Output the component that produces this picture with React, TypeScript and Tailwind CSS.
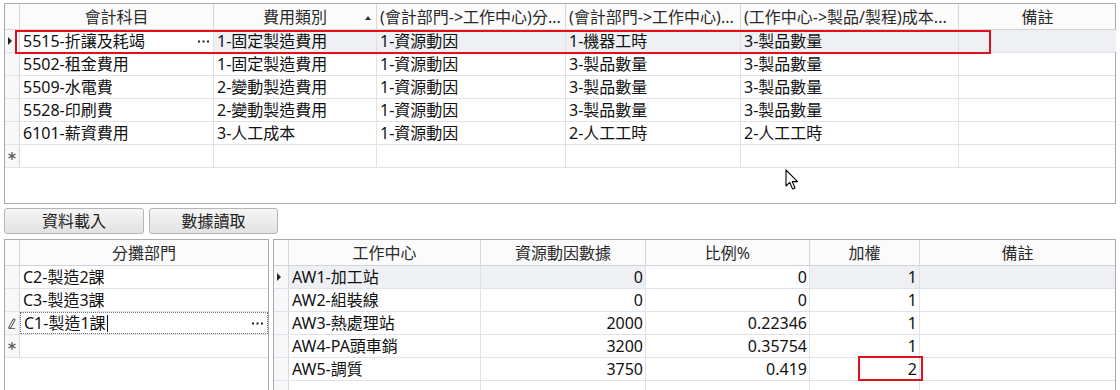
import React from "react";

type Col = { w: string; title: string; align?: "left" | "center"; sort?: boolean };

const topCols: Col[] = [
  { w: "w-[194px]", title: "會計科目" },
  { w: "w-[163px]", title: "費用類別", sort: true },
  { w: "w-[189px]", title: "(會計部門->工作中心)分...", align: "left" },
  { w: "w-[175px]", title: "(會計部門->工作中心)...", align: "left" },
  { w: "w-[218px]", title: "(工作中心->製品/製程)成本...", align: "left" },
  { w: "w-[157px]", title: "備註" },
];

const topRows = [
  ["5515-折讓及耗竭", "1-固定製造費用", "1-資源動因", "1-機器工時", "3-製品數量", ""],
  ["5502-租金費用", "1-固定製造費用", "1-資源動因", "3-製品數量", "3-製品數量", ""],
  ["5509-水電費", "2-變動製造費用", "1-資源動因", "3-製品數量", "3-製品數量", ""],
  ["5528-印刷費", "2-變動製造費用", "1-資源動因", "3-製品數量", "3-製品數量", ""],
  ["6101-薪資費用", "3-人工成本", "1-資源動因", "2-人工工時", "2-人工工時", ""],
];

const rightCols = [
  { w: "w-[192px]", title: "工作中心", num: false },
  { w: "w-[165px]", title: "資源動因數據", num: true },
  { w: "w-[164px]", title: "比例%", num: true },
  { w: "w-[110px]", title: "加權", num: true },
  { w: "w-[195px]", title: "備註", num: false },
];

const rightRows = [
  ["AW1-加工站", "0", "0", "1", ""],
  ["AW2-組裝線", "0", "0", "1", ""],
  ["AW3-熱處理站", "2000", "0.22346", "1", ""],
  ["AW4-PA頭車銷", "3200", "0.35754", "1", ""],
  ["AW5-調質", "3750", "0.419", "2", ""],
];

const RowArrow = () => (
  <svg width="5" height="8" viewBox="0 0 5 8" className="ml-[3px]">
    <path d="M0 0 L4 4 L0 8 Z" fill="#222" />
  </svg>
);

const NewRowStar = () => (
  <svg width="8" height="8" viewBox="0 0 8 8" className="ml-[3px]">
    <g stroke="#555" strokeWidth="1.2">
      <line x1="4" y1="0" x2="4" y2="8" />
      <line x1="0.5" y1="2" x2="7.5" y2="6" />
      <line x1="0.5" y1="6" x2="7.5" y2="2" />
    </g>
  </svg>
);

const Pencil = () => (
  <svg width="8" height="11" viewBox="0 0 8 11" className="ml-[3px]">
    <path d="M5.5 0.8 L7.2 1.6 L2.8 9.8 L0.8 10.4 L1.1 8.4 Z" fill="none" stroke="#333" strokeWidth="0.9" />
    <line x1="1" y1="10.6" x2="7" y2="10.6" stroke="#333" strokeWidth="0.8" />
  </svg>
);

// the "..." button shown in an editing cell
const Dots = () => (
  <svg width="11" height="3" viewBox="0 0 11 3" className="mr-[1px]">
    <rect x="0" y="0.5" width="2" height="2" fill="#222" />
    <rect x="4.5" y="0.5" width="2" height="2" fill="#222" />
    <rect x="9" y="0.5" width="2" height="2" fill="#222" />
  </svg>
);

const RowHead = ({ kind }: { kind?: "arrow" | "star" | "pencil" }) => (
  <div className="w-[15px] shrink-0 h-full border-r border-[#d5d8dc] bg-[#f7f8fa] flex items-center">
    {kind === "arrow" && <RowArrow />}
    {kind === "star" && <NewRowStar />}
    {kind === "pencil" && <Pencil />}
  </div>
);

export default function App() {
  return (
    <div className="relative w-[1120px] h-[390px] overflow-hidden bg-white text-[16px] text-[#111] font-['Noto_Sans','Noto_Sans_CJK_TC',sans-serif]">
      {/* top grid */}
      <div className="ml-1 mt-[3px] w-[1112px] h-[201px] border border-[#ababab] bg-white">
        <div className="flex h-[26px] border-b border-[#d0d3d8] bg-[#fbfbfb] text-[#2a2a2a]">
          <div className="w-[15px] shrink-0 border-r border-[#d5d8dc]" />
          {topCols.map((c, i) => (
            <div
              key={i}
              className={`${c.w} shrink-0 relative flex items-center overflow-hidden whitespace-nowrap border-r border-[#d5d8dc] ${
                c.align === "left" ? "pl-[3px]" : "justify-center"
              } ${i === topCols.length - 1 ? "border-r-0" : ""}`}
            >
              {c.title}
              {c.sort && (
                <svg width="6" height="4" viewBox="0 0 6 4" className="absolute right-[5px] top-[12px]">
                  <path d="M0 4 L3 0 L6 4 Z" fill="#333" />
                </svg>
              )}
            </div>
          ))}
        </div>
        {topRows.map((r, ri) => (
          <div key={ri} className="flex h-[23px] border-b border-[#dfe2e6]">
            <RowHead kind={ri === 0 ? "arrow" : undefined} />
            {r.map((v, ci) => (
              <div
                key={ci}
                className={`${topCols[ci].w} shrink-0 flex items-center justify-between pl-[3px] pr-[3px] whitespace-nowrap overflow-hidden border-r border-[#dfe2e6] ${
                  ri === 0 && ci > 0 ? "bg-[#eef0f3]" : ""
                } ${ci === r.length - 1 ? "border-r-0" : ""}`}
              >
                <span>{v}</span>
                {ri === 0 && ci === 0 && <Dots />}
              </div>
            ))}
          </div>
        ))}
        <div className="flex h-[23px] border-b border-[#dfe2e6]">
          <RowHead kind="star" />
          {topCols.map((c, ci) => (
            <div key={ci} className={`${c.w} shrink-0 border-r border-[#dfe2e6] ${ci === topCols.length - 1 ? "border-r-0" : ""}`} />
          ))}
        </div>
      </div>

      {/* buttons */}
      <div className="ml-1 mt-[4px] flex gap-[5px]">
        <button className="w-[140px] h-[26px] rounded-[3px] border border-[#b5b5b5] bg-gradient-to-b from-[#f6f6f6] to-[#e2e2e2] text-[#222] leading-none">
          資料載入
        </button>
        <button className="w-[129px] h-[26px] rounded-[3px] border border-[#b5b5b5] bg-gradient-to-b from-[#f6f6f6] to-[#e2e2e2] text-[#222] leading-none">
          數據讀取
        </button>
      </div>

      {/* bottom grids */}
      <div className="ml-1 mt-[5px] flex gap-[4px]">
        <div className="w-[265px] h-[160px] border border-[#ababab] bg-white">
          <div className="flex h-[26px] border-b border-[#d0d3d8] bg-[#fbfbfb] text-[#2a2a2a]">
            <div className="w-[15px] shrink-0 border-r border-[#d5d8dc]" />
            <div className="w-[248px] flex items-center justify-center">分攤部門</div>
          </div>
          {["C2-製造2課", "C3-製造3課"].map((v) => (
            <div key={v} className="flex h-[23px] border-b border-[#dfe2e6]">
              <RowHead />
              <div className="w-[248px] flex items-center pl-[3px]">{v}</div>
            </div>
          ))}
          <div className="flex h-[23px] border-b border-[#dfe2e6]">
            <RowHead kind="pencil" />
            <div className="w-[248px] flex items-center justify-between pl-[3px] pr-[3px] border border-dotted border-[#777]">
              <span className="flex items-center">
                C1-製造1課
                <span className="inline-block w-px h-[17px] bg-[#111] ml-[1px]" />
              </span>
              <Dots />
            </div>
          </div>
          <div className="flex h-[23px] border-b border-[#dfe2e6]">
            <RowHead kind="star" />
            <div className="w-[248px]" />
          </div>
        </div>

        <div className="w-[843px] h-[160px] border border-[#ababab] bg-white">
          <div className="flex h-[26px] border-b border-[#d0d3d8] bg-[#fbfbfb] text-[#2a2a2a]">
            <div className="w-[15px] shrink-0 border-r border-[#d5d8dc]" />
            {rightCols.map((c, i) => (
              <div
                key={i}
                className={`${c.w} shrink-0 flex items-center justify-center border-r border-[#d5d8dc] ${i === rightCols.length - 1 ? "border-r-0" : ""}`}
              >
                {c.title}
              </div>
            ))}
          </div>
          {rightRows.map((r, ri) => (
            <div key={ri} className="flex h-[23px] border-b border-[#dfe2e6]">
              <RowHead kind={ri === 0 ? "arrow" : undefined} />
              {r.map((v, ci) => (
                <div
                  key={ci}
                  className={`${rightCols[ci].w} shrink-0 flex items-center whitespace-nowrap border-r border-[#dfe2e6] ${
                    rightCols[ci].num ? "justify-end pr-[2px]" : "pl-[3px]"
                  } ${ri === 0 && ci !== 2 ? "bg-[#eef0f3]" : ""} ${ci === r.length - 1 ? "border-r-0" : ""}`}
                >
                  {v}
                </div>
              ))}
            </div>
          ))}
          <div className="flex h-[23px]">
            <RowHead />
            {rightCols.map((c, ci) => (
              <div key={ci} className={`${c.w} shrink-0 border-r border-[#dfe2e6] ${ci === rightCols.length - 1 ? "border-r-0" : ""}`} />
            ))}
          </div>
        </div>
      </div>

      {/* annotations */}
      <div className="absolute left-[15px] top-[30px] w-[976px] h-[24px] border-2 border-[#e3101a]" />
      <div className="absolute left-[858px] top-[356px] w-[65px] h-[25px] border-2 border-[#e3101a]" />

      {/* mouse pointer */}
      <svg width="14" height="23" viewBox="0 0 14 23" className="absolute left-[785px] top-[169px]">
        <path
          d="M1 1 L1 17 L4.8 13.4 L7.6 20 L10 19 L7.3 12.6 L12.5 12.6 Z"
          fill="#fff"
          stroke="#000"
          strokeWidth="1.1"
          strokeLinejoin="round"
        />
      </svg>
    </div>
  );
}
